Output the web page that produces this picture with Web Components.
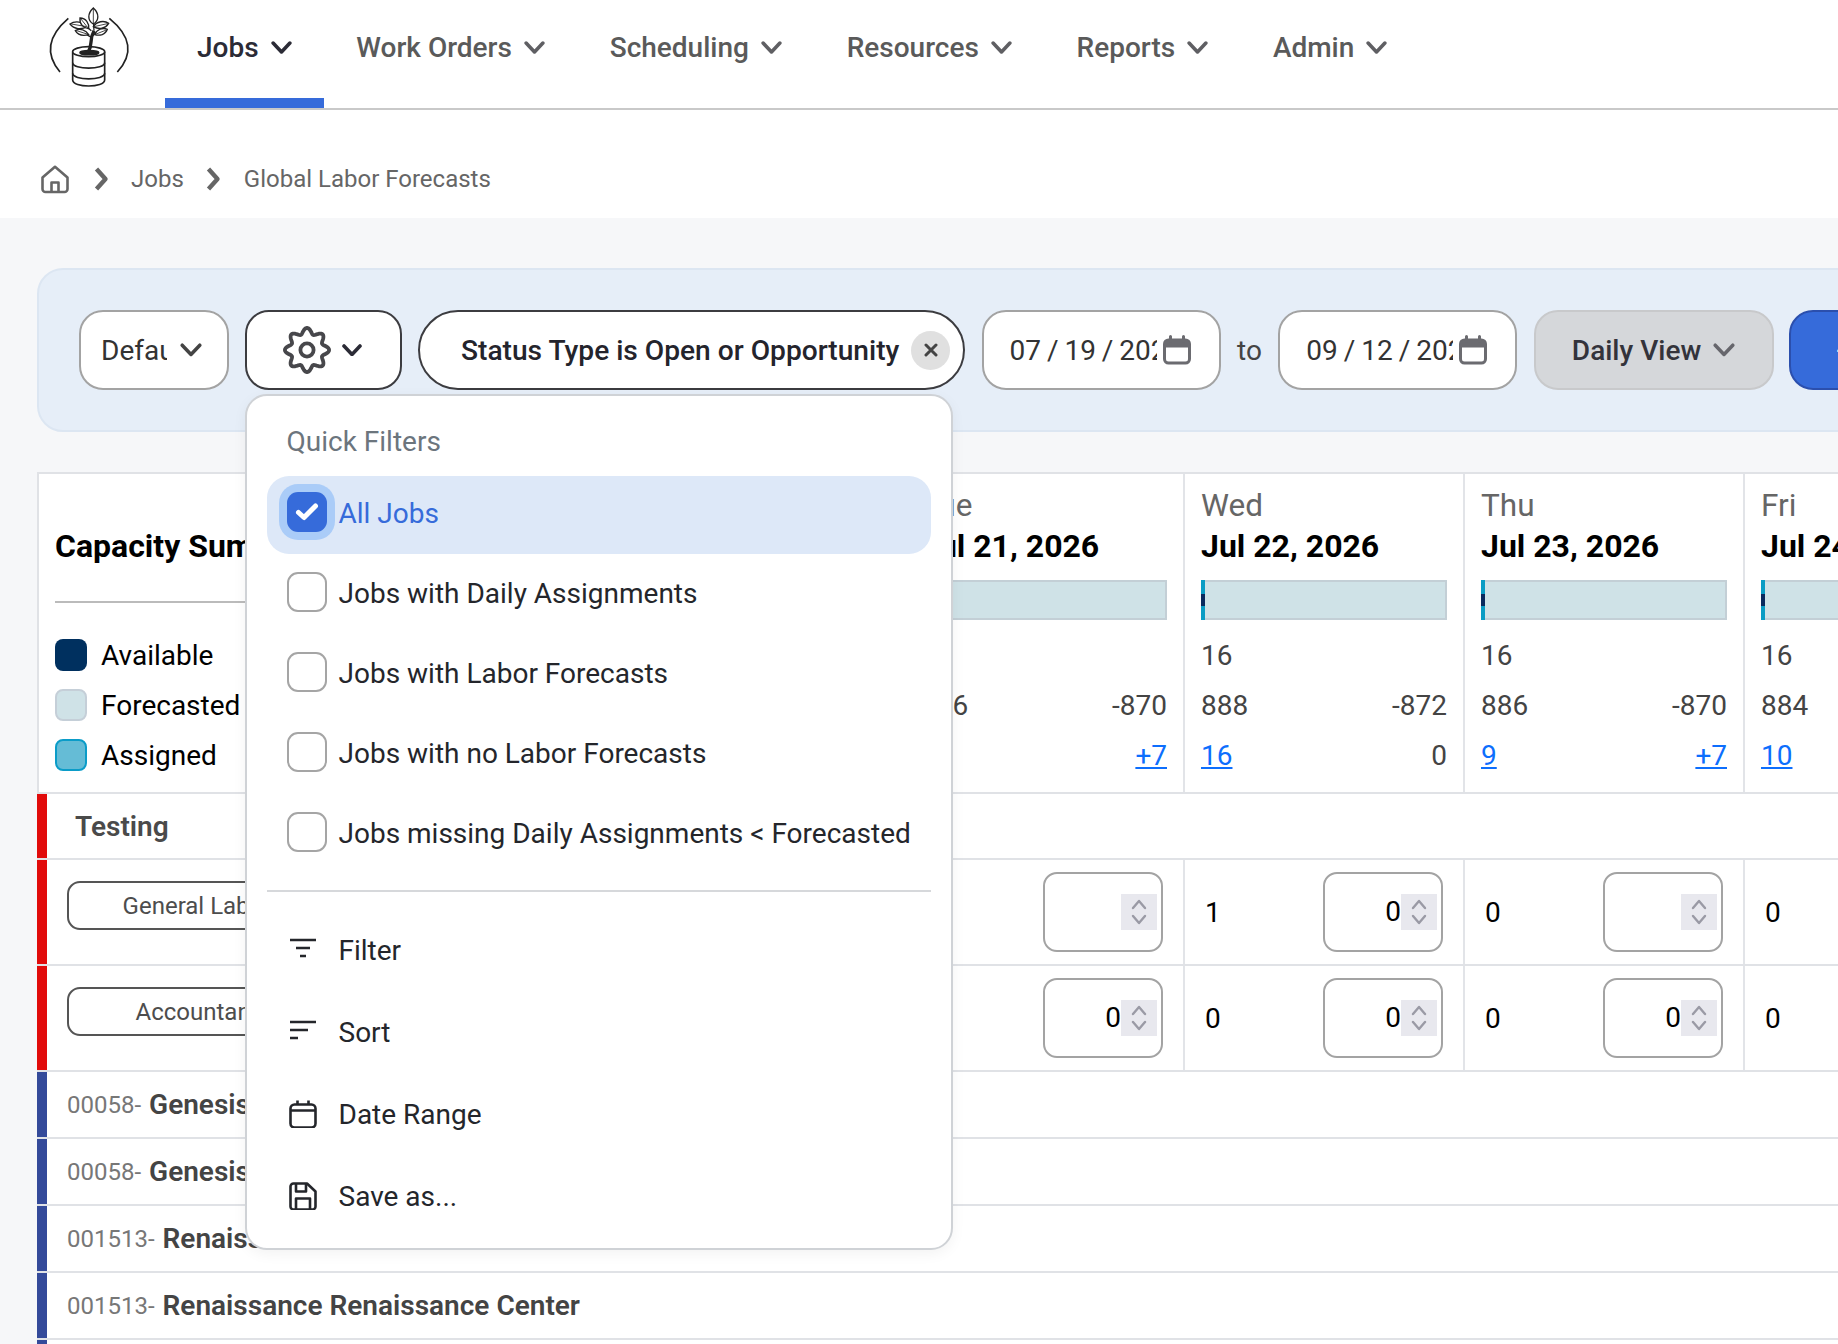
<!DOCTYPE html>
<html lang="en">
<head>
<meta charset="utf-8">
<title>Global Labor Forecasts</title>
<style>
    * { box-sizing: border-box; }
    html, body { margin: 0; padding: 0; width: 1838px; height: 1344px; overflow: hidden; background: #f6f7f9; font-family: Roboto, "Liberation Sans", sans-serif; }
</style>
</head>
<body>
<top-nav>
    <nav-item active>Jobs</nav-item>
    <nav-item>Work Orders</nav-item>
    <nav-item>Scheduling</nav-item>
    <nav-item>Resources</nav-item>
    <nav-item>Reports</nav-item>
    <nav-item>Admin</nav-item>
</top-nav>
<bread-crumbs>
    <span>Jobs</span>
    <span>Global Labor Forecasts</span>
</bread-crumbs>
<main-area>
    <filter-bar>
        <quick-menu slot="menu">
            <menu-check checked>All Jobs</menu-check>
            <menu-check>Jobs with Daily Assignments</menu-check>
            <menu-check>Jobs with Labor Forecasts</menu-check>
            <menu-check>Jobs with no Labor Forecasts</menu-check>
            <menu-check>Jobs missing Daily Assignments &lt; Forecasted</menu-check>
            <menu-action slot="actions" icon="filter">Filter</menu-action>
            <menu-action slot="actions" icon="sort">Sort</menu-action>
            <menu-action slot="actions" icon="date">Date Range</menu-action>
            <menu-action slot="actions" icon="save">Save as...</menu-action>
        </quick-menu>
    </filter-bar>
    <forecast-grid></forecast-grid>
</main-area>

<script>
const chevron = (w, color, sw) => /*html */`<svg width="${w}" height="${w * 0.62}" viewBox="0 0 20 12.4" fill="none" stroke="${color}" stroke-width="${sw}" stroke-linecap="round" stroke-linejoin="round" style="flex:none"><path d="M2 2l8 8.4L18 2"/></svg>`

// gear with 8 soft lobes, same shape as the reference
function gearPath() {
    let d = ''
    for (let i = 0; i <= 160; i++) {
        const a = i / 160 * Math.PI * 2
        const r = 19.2 + 2.9 * Math.cos(8 * a)
        const x = 24 + r * Math.sin(a)
        const y = 24 - r * Math.cos(a)
        d += (i ? 'L' : 'M') + x.toFixed(2) + ' ' + y.toFixed(2)
    }
    return d + 'Z'
}

class Base extends HTMLElement {
    render(html) {
        this.attachShadow({mode: 'open'})
        this.shadowRoot.innerHTML = html
    }
}

class TopNav extends Base {
    constructor() {
        super()
        this.render(/*html */`
        <style>
            :host { display: flex; height: 110px; background: #fff; border-bottom: 2px solid #c9c9c9; padding-left: 30px; box-sizing: border-box; }
            svg { display: block; }
            .logo { flex: none; width: 120px; height: 108px; margin-right: 15px; }
        </style>
        <div class="logo">
            <svg width="120" height="110" viewBox="0 0 360 330" fill="#fff" stroke="#222" stroke-width="5">
                <path d="M115 55Q22 135 90 216M238 55Q336 135 262 216" fill="none"/>
                <path d="M128 155V240C128 264 224 264 224 240V155" />
                <ellipse cx="176" cy="155" rx="48" ry="15"/>
                <path d="M128 188C128 210 224 210 224 188M128 220C128 242 224 242 224 220" fill="none"/>
                <ellipse cx="178" cy="158" rx="28" ry="6" fill="#222"/>
                <path d="M174 158C190 132 176 122 192 92" fill="none" stroke-width="10"/>
                <path d="M184 112L150 92M186 108L212 88M192 92L190 60M184 92L160 72M190 84L214 70" fill="none" stroke-width="4"/>
                <path d="M190 24C172 40 172 62 190 72C208 62 208 40 190 24Z" stroke-width="4"/>
                <path d="M120 72C134 62 160 64 172 80C154 90 132 88 120 72Z" stroke-width="4"/>
                <path d="M150 54C168 54 178 70 176 86C160 84 148 72 150 54Z" stroke-width="4"/>
                <path d="M136 92C150 84 168 90 176 104C160 108 144 106 136 92Z" stroke-width="4"/>
                <path d="M236 70C222 60 200 64 190 80C208 90 226 86 236 70Z" stroke-width="4"/>
                <path d="M232 88C218 82 200 88 194 104C210 108 226 104 232 88Z" stroke-width="4"/>
                <path d="M190 24V72M124 72L170 80M152 56L175 85M140 92L174 103M232 71L192 80M229 90L196 103" fill="none" stroke-width="2.5"/>
            </svg>
        </div>
        <slot></slot>`)
    }
}

class NavItem extends Base {
    constructor() {
        super()
        const on = this.hasAttribute('active')
        this.render(/*html */`
        <style>
            :host { display: flex; flex: none; height: 108px; padding: 0 32px 0 ${on ? 32 : 32.75}px; box-sizing: border-box; border-bottom: 10px solid ${on ? '#366bda' : 'transparent'}; font-size: 28px; font-weight: 500; color: ${on ? '#2b2b36' : '#5a5a5a'}; }
            .in { display: flex; align-items: center; gap: 12px; height: 95px; }
        </style>
        <div class="in"><slot></slot>${chevron(21, on ? '#2b2b36' : '#5f5f63', 3.4)}</div>`)
    }
}

class BreadCrumbs extends Base {
    constructor() {
        super()
        const sep = /*html */`<svg width="15" height="24" viewBox="0 0 15 24" fill="none" stroke="#666" stroke-width="4.4" stroke-linejoin="round" style="display:block"><path d="M2.5 2l9 10-9 10"/></svg>`
        this.render(/*html */`
        <style>
            :host { display: flex; align-items: center; height: 108px; padding: 30px 0 0 41px; background: #fff; box-sizing: border-box; font-size: 24px; color: #666; }
            .home { margin-right: 25px; display: block; }
            .s { display: block; }
            .s1 { margin-right: 22px; }
            .s2 { margin: 0 23px 0 22px; }
        </style>
        <svg class="home" width="28" height="29" viewBox="0 0 28 29" fill="none" stroke="#666" stroke-width="2.6" stroke-linejoin="round"><path d="M1.5 12.5L14 1.8l12.5 10.7V24a3 3 0 0 1-3 3h-19a3 3 0 0 1-3-3z"/><path d="M10.5 27v-9.5h7V27"/></svg>
        <span class="s s1">${sep}</span>
        <slot name="first"></slot>
        <span class="s s2">${sep}</span>
        <slot name="last"></slot>`)
        const parts = this.querySelectorAll('span')
        parts[0].slot = 'first'
        parts[1].slot = 'last'
    }
}

class MainArea extends Base {
    constructor() {
        super()
        this.render(/*html */`
        <style>
            :host { display: block; padding: 50px 0 0 37px; background: #f6f7f9; }
        </style>
        <slot></slot>`)
    }
}

class FilterBar extends Base {
    constructor() {
        super()
        const cal = /*html */`<svg width="30" height="30" viewBox="0 0 30 30" fill="none" style="flex:none"><rect x="2.5" y="5" width="25" height="23" rx="4" stroke="#6b6b70" stroke-width="3"/><path d="M2.5 9a4 4 0 0 1 4-4h17a4 4 0 0 1 4 4v3.5h-25z" fill="#6b6b70"/><path d="M8.5 1.5v5M21.5 1.5v5" stroke="#6b6b70" stroke-width="3" stroke-linecap="round"/></svg>`
        this.render(/*html */`
        <style>
            :host { display: block; position: relative; z-index: 10; width: 1900px; height: 164px; background: #e6eef8; border: 2px solid #dce6f2; border-radius: 26px; padding: 40px 0 0 40px; box-sizing: border-box; }
            .row { display: flex; gap: 16.5px; align-items: center; }
            .btn { display: flex; align-items: center; flex: none; height: 80px; background: #fff; border: 2px solid #a3a3a3; border-radius: 24px; font-size: 28px; color: #333; box-sizing: border-box; }
            .default { width: 149.5px; margin-right: -0.5px; padding-left: 20px; }
            .default span { width: 66px; overflow: hidden; white-space: nowrap; margin-right: 13px; }
            .gear { position: relative; width: 157px; padding-left: 36px; gap: 11px; border-color: #3c3c40; }
            .status { width: 547px; border-color: #3c3c40; border-radius: 40px; padding-left: 41px; font-size: 28.15px; font-weight: 500; color: #24242c; white-space: nowrap; }
            .status b { display: flex; align-items: center; justify-content: center; width: 39px; height: 39px; margin-left: 12px; border-radius: 50%; background: #e0e0e0; }
            .date { width: 239px; padding-left: 26px; }
            .date span { width: 147px; overflow: hidden; white-space: nowrap; margin-right: 5px; word-spacing: -1px; }
            .to { font-size: 28px; color: #444; width: 25.5px; }
            .view { width: 240px; padding-left: 36px; gap: 12px; background: #d5d7da; border-color: #c8c9cb; font-weight: 500; color: #33333b; }
            .add { width: 160px; margin-left: -1px; padding-left: 45px; background: #366bda; border-color: #2b4fad; color: #fff; }
            ::slotted([slot=menu]) { position: absolute; left: -2px; top: 82px; }
        </style>
        <div class="row">
            <div class="btn default"><span>Default</span>${chevron(22, '#444', 3.2)}</div>
            <div class="btn gear">
                <svg width="48" height="48" viewBox="0 0 48 48" fill="none" stroke="#47474b" stroke-width="3.8" stroke-linejoin="round" style="flex:none"><path d="${gearPath()}"/><circle cx="24" cy="24" r="6.6"/></svg>
                ${chevron(20, '#2b2b36', 3.6)}
                <slot name="menu"></slot>
            </div>
            <div class="btn status">Status Type is Open or Opportunity<b><svg width="14" height="14" viewBox="0 0 14 14" stroke="#444" stroke-width="3" stroke-linecap="round"><path d="M2 2l10 10M12 2L2 12"/></svg></b></div>
            <div class="btn date"><span>07 / 19 / 2026</span>${cal}</div>
            <div class="to">to</div>
            <div class="btn date"><span>09 / 12 / 2026</span>${cal}</div>
            <div class="btn view">Daily View ${chevron(22, '#66666c', 3.2)}</div>
            <div class="btn add">+</div>
        </div>`)
    }
}

class QuickMenu extends Base {
    constructor() {
        super()
        this.render(/*html */`
        <style>
            :host { display: block; width: 708px; height: 856px; background: #fff; border: 2px solid #cfd2d6; border-radius: 22px; padding: 26px 20px 0 20px; box-sizing: border-box; box-shadow: 0 4px 14px rgba(0,0,0,.05); font-size: 28px; color: #24262b; cursor: default; }
            h4 { margin: 0 0 14px 20px; font-size: 28px; line-height: 40px; font-weight: 400; color: #6c757d; }
            .checks { display: flex; flex-direction: column; gap: 2px; }
            hr { margin: 16px 0 17px; height: 2px; border: 0; background: #d6d8db; }
        </style>
        <h4>Quick Filters</h4>
        <div class="checks"><slot></slot></div>
        <hr>
        <slot name="actions"></slot>`)
    }
}

class MenuCheck extends Base {
    constructor() {
        super()
        const on = this.hasAttribute('checked')
        this.render(/*html */`
        <style>
            :host { display: flex; align-items: flex-start; gap: 12px; height: 78px; padding: 16px 0 0 20px; box-sizing: border-box; border-radius: 22px; white-space: nowrap; line-height: 44px; ${on ? 'background:#dde8f8;color:#366bda;' : ''} }
            .box { flex: none; display: flex; align-items: center; justify-content: center; width: 40px; height: 40px; border-radius: 11px; box-sizing: border-box; ${on ? 'background:#366bda;box-shadow:0 0 0 8px #aaccf8;' : 'border:2px solid #a5a5a5;background:#fff;'} }
        </style>
        <div class="box">${on ? '<svg width="24" height="20" viewBox="0 0 24 20" fill="none" stroke="#fff" stroke-width="5" stroke-linecap="round" stroke-linejoin="round"><path d="M3.5 10.5l5.5 5L20.5 4"/></svg>' : ''}</div>
        <slot></slot>`)
    }
}

const menuIcons = {
    filter: '<path d="M1 4h26M7 12h14M11 20h6"/>',
    sort: '<path d="M1 4h26M1 12h18M1 20h8"/>',
    date: '<rect x="1.5" y="4.5" width="25" height="23" rx="4"/><path d="M1.5 10.5h25M8.5 .5v4M19.5 .5v4"/>',
    save: '<path d="M4.5 1.5H18L26.5 9.5V24.5a3 3 0 0 1-3 3h-19a3 3 0 0 1-3-3v-20a3 3 0 0 1 3-3z"/><path d="M7 27V16.5h14V27M7 2v7.5h10V2"/>'
}

class MenuAction extends Base {
    constructor() {
        super()
        const icon = this.getAttribute('icon')
        const sw = icon === 'filter' || icon === 'sort' ? 2.4 : 2.6
        this.render(/*html */`
        <style>
            :host { display: flex; align-items: center; gap: 22px; height: 82px; padding-left: 22px; box-sizing: border-box; }
            svg { flex: none; }
        </style>
        <svg width="28" height="28" viewBox="0 0 28 28" fill="none" stroke="#24262b" stroke-width="${sw}" stroke-linejoin="round">${menuIcons[icon]}</svg>
        <slot></slot>`)
    }
}

class NumStepper extends Base {
    constructor() {
        super()
        this.render(/*html */`
        <style>
            :host { display: flex; align-items: center; justify-content: flex-end; width: 120px; height: 80px; padding-right: 4px; background: #fff; border: 2px solid #a3a3a3; border-radius: 14px; box-sizing: border-box; font-size: 28px; color: #000; }
            span { margin-top: -2px; }
            .spin { flex: none; display: flex; align-items: center; justify-content: center; width: 36px; height: 36px; background: #e8e8ee; }
        </style>
        <span>${this.getAttribute('value') || ''}</span>
        <div class="spin"><svg width="16" height="28" viewBox="0 0 16 28" fill="none" stroke="#9a9aa5" stroke-width="2.4" stroke-linecap="round" stroke-linejoin="round"><path d="M2 10l6-7 6 7M2 18l6 7 6-7"/></svg></div>`)
    }
}

const days = [
    {day: 'Tue', date: 'Jul 21, 2026', cap: '16', fore: '886', diff: '-870', asg: '9', over: '+7', v1: '0', in1: '', v2: '0', in2: '0'},
    {day: 'Wed', date: 'Jul 22, 2026', cap: '16', fore: '888', diff: '-872', asg: '16', over: '0', v1: '1', in1: '0', v2: '0', in2: '0'},
    {day: 'Thu', date: 'Jul 23, 2026', cap: '16', fore: '886', diff: '-870', asg: '9', over: '+7', v1: '0', in1: '', v2: '0', in2: '0'},
    {day: 'Fri', date: 'Jul 24, 2026', cap: '16', fore: '884', diff: '-868', asg: '10', over: '+6', v1: '0', in1: '', v2: '0', in2: '0'},
]

const jobs = [
    ['00058-', 'Genesis Genesis Center'],
    ['00058-', 'Genesis Genesis Center'],
    ['001513-', 'Renaissance Renaissance Center'],
    ['001513-', 'Renaissance Renaissance Center'],
]

class ForecastGrid extends Base {
    constructor() {
        super()
        const link = (t) => t.match(/^\+|^[1-9]/) ? `<a>${t}</a>` : t
        const head = days.map(d => /*html */`
            <div class="cell day">
                <div class="dn">${d.day}</div>
                <div class="dt">${d.date}</div>
                <div class="bar"><i></i></div>
                <div class="ln">${d.cap}</div>
                <div class="ln sb"><span>${d.fore}</span><span>${d.diff}</span></div>
                <div class="ln sb"><span>${link(d.asg)}</span><span>${link(d.over)}</span></div>
            </div>`).join('')
        const inputs = (v, i) => days.map(d => /*html */`
            <div class="cell val"><span>${d[v]}</span><num-stepper value="${d[i]}"></num-stepper></div>`).join('')
        const role = (name, v, i) => /*html */`
            <div class="row role">
                <i class="stripe red"></i>
                <div class="side"><div class="pill">${name}</div></div>
                ${inputs(v, i)}
            </div>`
        this.render(/*html */`
        <style>
            :host { display: block; width: 1900px; margin-top: 40px; background: #fff; font-size: 28px; color: #444; position: relative; }
            .row { display: flex; border-bottom: 2px solid #e0e2e6; box-sizing: border-box; background: #fff; }
            .stripe { flex: none; width: 10px; }
            .red { background: #e10b0b; }
            .blue { background: #344a9a; }
            .head { height: 322px; border-top: 2px solid #e0e2e6; border-left: 2px solid #e0e2e6; }
            .summary { flex: none; width: 864px; padding: 52px 0 0 16px; box-sizing: border-box; }
            .summary h3 { margin: 0; font-size: 32px; line-height: 40px; font-weight: 700; color: #000; white-space: nowrap; }
            .summary hr { width: 260px; height: 2px; margin: 35px 0 27px; border: 0; background: #bbb; }
            .lg { display: flex; align-items: center; gap: 14px; height: 50px; color: #000; }
            .lg i { width: 32px; height: 32px; border-radius: 8px; box-sizing: border-box; }
            .cell { flex: none; width: 280px; border-left: 2px solid #e2e4e8; box-sizing: border-box; }
            .day { padding: 12px 16px 0 16px; }
            .dn { font-size: 31.5px; line-height: 40px; color: #666; }
            .dt { font-size: 32px; line-height: 40px; font-weight: 700; color: #000; white-space: nowrap; }
            .bar { position: relative; height: 40px; margin: 14px 0 11px; background: #cfe2e7; border: 2px solid #c3cfd6; box-sizing: border-box; }
            .bar i { position: absolute; left: -2px; top: -2px; bottom: -2px; width: 4px; background: linear-gradient(#0a9cc4 0 14px, #0a2a5e 14px 26px, #0a9cc4 26px); }
            .ln { height: 50px; line-height: 50px; }
            .sb { display: flex; justify-content: space-between; }
            a { color: #0d6efd; text-decoration: underline; }
            .group { height: 66px; align-items: stretch; }
            .group b { align-self: center; margin-left: 28px; font-weight: 600; color: #4a4a4a; }
            .role { height: 106px; }
            .side { flex: none; width: 856px; padding: 21px 0 0 20px; box-sizing: border-box; }
            .pill { width: 260px; height: 49px; line-height: 46px; border: 2px solid #555; border-radius: 13px; box-sizing: border-box; text-align: center; font-size: 24px; color: #4d4d4d; }
            .val { display: flex; align-items: center; justify-content: space-between; padding: 0 20px 0 20px; color: #000; }
            .job { height: 67px; align-items: center; white-space: nowrap; }
            .job .stripe { align-self: stretch; }
            .job small { margin-left: 20px; font-size: 24px; color: #777; }
            .job b { margin-left: 8px; font-size: 28px; font-weight: 600; color: #444; }
        </style>
        <div class="row head">
            <div class="summary">
                <h3>Capacity Summary</h3>
                <hr>
                <div class="lg"><i style="background:#00305f"></i>Available</div>
                <div class="lg"><i style="background:#cfe2e7;border:2px solid #c5cfd8"></i>Forecasted</div>
                <div class="lg"><i style="background:#65bcd6;border:2px solid #0b9cc8"></i>Assigned</div>
            </div>
            ${head}
        </div>
        <div class="row group"><i class="stripe red"></i><b>Testing</b></div>
        ${role('General Labor', 'v1', 'in1')}
        ${role('Accountant', 'v2', 'in2')}
        ${jobs.map(j => /*html */`<div class="row job"><i class="stripe blue"></i><small>${j[0]}</small><b>${j[1]}</b></div>`).join('')}
        <div class="row job"><i class="stripe blue"></i></div>`)
    }
}

customElements.define('nav-item', NavItem)
customElements.define('top-nav', TopNav)
customElements.define('bread-crumbs', BreadCrumbs)
customElements.define('main-area', MainArea)
customElements.define('menu-check', MenuCheck)
customElements.define('menu-action', MenuAction)
customElements.define('quick-menu', QuickMenu)
customElements.define('filter-bar', FilterBar)
customElements.define('num-stepper', NumStepper)
customElements.define('forecast-grid', ForecastGrid)
</script>
</body>
</html>
